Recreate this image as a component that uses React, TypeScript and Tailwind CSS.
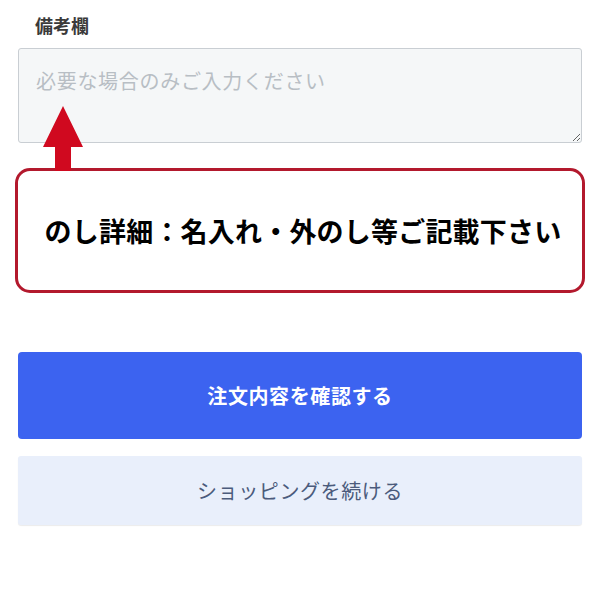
import React from 'react';

const jp = "font-['Noto_Sans_CJK_JP','Noto_Sans',sans-serif]";

// red annotation arrow pointing up at the textarea
const UpArrow: React.FC = () => (
  <svg width="42" height="66" viewBox="0 0 42 66" className="absolute left-[42px] top-[106px]">
    <polygon points="21,0 41,41 29,41 29,65 13,65 13,41 1,41" fill="#d0091f" />
  </svg>
);

export default function App() {
  return (
    <div className={`w-[600px] h-[600px] bg-white ${jp}`}>
      <div className="relative px-[18px] pt-[13px]">
        <label className="block pl-[17px] text-[18px] leading-[24px] font-bold text-[#3a3a3a]">
          備考欄
        </label>
        <textarea
          placeholder="必要な場合のみご入力ください"
          className="mt-[11px] block w-full h-[95px] rounded-[3px] border border-[#c9ced3] bg-[#f5f7f8] px-[17px] pt-[18px] text-[20px] leading-[28px] tracking-[0.7px] text-[#333] placeholder:text-[#b8bec4] outline-none"
        />
        <div className="-mx-[3px] mt-[25px] flex h-[125px] items-center justify-center rounded-[15px] border-[3px] border-[#b3192d] bg-white">
          <p className="pl-[6px] text-[27px] leading-none font-bold tracking-[0.2px] text-black">
            のし詳細：名入れ・外のし等ご記載下さい
          </p>
        </div>
        <UpArrow />
        <button className="mt-[59px] flex h-[87px] w-full items-center justify-center rounded-[4px] bg-[#3c63f0] text-[20px] font-bold tracking-[0.6px] text-white">
          注文内容を確認する
        </button>
        <button className="mt-[17px] flex h-[69px] w-full items-center justify-center rounded-[3px] bg-[#e9effb] text-[20px] tracking-[0.6px] text-[#4b5b7c] shadow-[0_1px_1px_rgba(0,0,0,0.08)]">
          ショッピングを続ける
        </button>
      </div>
    </div>
  );
}
